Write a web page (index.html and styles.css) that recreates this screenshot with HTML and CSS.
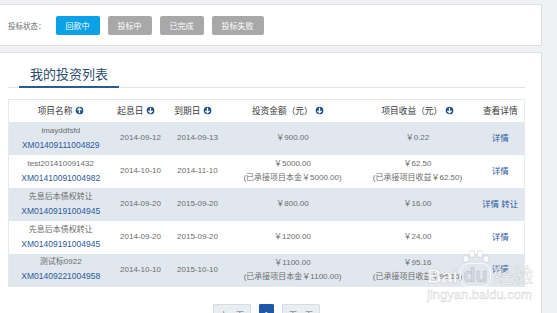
FILE: index.html
```html
<!DOCTYPE html>
<html lang="zh-CN">

<head>
    <meta charset="UTF-8">
    <meta name="viewport" content="width=device-width, initial-scale=1.0">
    <title>我的投资列表</title>
    <link rel="stylesheet" href="styles.css">
</head>

<body>
    <div class="page">
        <div class="status-panel">
            <span class="status-label">投标状态：</span>
            <button class="status-btn active">回款中</button>
            <button class="status-btn">投标中</button>
            <button class="status-btn">已完成</button>
            <button class="status-btn">投标失败</button>
        </div>

        <div class="list-panel">
            <div class="list-head">
                <h2 class="list-title">我的投资列表</h2>
            </div>

            <table class="invest-table">
                <colgroup>
                    <col style="width: 104px">
                    <col style="width: 56px">
                    <col style="width: 58px">
                    <col style="width: 132px">
                    <col style="width: 118px">
                    <col>
                </colgroup>
                <thead>
                    <tr>
                        <th>项目名称 <svg class="sort" viewBox="0 0 10 10"><circle cx="5" cy="5" r="5"/><path d="M5 8V2.4M2.7 4.7 5 2.4 7.3 4.7"/></svg></th>
                        <th class="shift">起息日 <svg class="sort" viewBox="0 0 10 10"><circle cx="5" cy="5" r="5"/><path d="M5 2v5.6M2.7 5.3 5 7.6 7.3 5.3"/></svg></th>
                        <th class="shift">到期日 <svg class="sort" viewBox="0 0 10 10"><circle cx="5" cy="5" r="5"/><path d="M5 2v5.6M2.7 5.3 5 7.6 7.3 5.3"/></svg></th>
                        <th class="shift">投资金额（元） <svg class="sort" viewBox="0 0 10 10"><circle cx="5" cy="5" r="5"/><path d="M5 2v5.6M2.7 5.3 5 7.6 7.3 5.3"/></svg></th>
                        <th>项目收益（元） <svg class="sort" viewBox="0 0 10 10"><circle cx="5" cy="5" r="5"/><path d="M5 2v5.6M2.7 5.3 5 7.6 7.3 5.3"/></svg></th>
                        <th>查看详情</th>
                    </tr>
                </thead>
                <tbody>
                    <tr class="odd">
                        <td>imayddfsfd<br><a href="#">XM01409111004829</a></td>
                        <td>2014-09-12</td>
                        <td>2014-09-13</td>
                        <td>￥900.00</td>
                        <td>￥0.22</td>
                        <td><a href="#">详情</a></td>
                    </tr>
                    <tr>
                        <td>test201410091432<br><a href="#">XM01410091004982</a></td>
                        <td>2014-10-10</td>
                        <td>2014-11-10</td>
                        <td>￥5000.00<br>(已承接项目本金￥5000.00)</td>
                        <td>￥62.50<br>(已承接项目收益￥62.50)</td>
                        <td><a href="#">详情</a></td>
                    </tr>
                    <tr class="odd">
                        <td>先息后本债权转让<br><a href="#">XM01409191004945</a></td>
                        <td>2014-09-20</td>
                        <td>2015-09-20</td>
                        <td>￥800.00</td>
                        <td>￥16.00</td>
                        <td><a href="#">详情</a> <a href="#">转让</a></td>
                    </tr>
                    <tr>
                        <td>先息后本债权转让<br><a href="#">XM01409191004945</a></td>
                        <td>2014-09-20</td>
                        <td>2015-09-20</td>
                        <td>￥1200.00</td>
                        <td>￥24.00</td>
                        <td><a href="#">详情</a></td>
                    </tr>
                    <tr class="odd">
                        <td>测试标0922<br><a href="#">XM01409221004958</a></td>
                        <td>2014-10-10</td>
                        <td>2015-10-10</td>
                        <td>￥1100.00<br>(已承接项目本金￥1100.00)</td>
                        <td>￥95.16<br>(已承接项目收益￥95.16)</td>
                        <td><a href="#">详情</a></td>
                    </tr>
                </tbody>
            </table>

            <div class="pager">
                <button class="page-btn">上一页</button>
                <button class="page-btn current">1</button>
                <button class="page-btn">下一页</button>
            </div>
        </div>
    </div>

    <!-- 水印 -->
    <div class="watermark">
        <svg class="wm-paw" viewBox="0 0 30 16"><ellipse cx="5" cy="9" rx="3" ry="3.6"/><ellipse cx="11" cy="4" rx="3" ry="3.6"/><ellipse cx="19" cy="4" rx="3" ry="3.6"/><ellipse cx="25" cy="9" rx="3" ry="3.6"/></svg>
        <div class="wm-logo">
            <span>Bai</span>
            <span class="wm-du">du</span>
            <span class="wm-cn">经验</span>
        </div>
        <div class="wm-url">jingyan.baidu.com</div>
    </div>
</body>

</html>
```

FILE: styles.css
```css
* {
    box-sizing: border-box;
    margin: 0;
}

body {
    background-color: #f0f1f2;
    font-family: "Liberation Sans", "Noto Sans CJK SC", sans-serif;
    color: #6c6c6c;
    overflow: hidden;
}

.page {
    padding: 4px 15px 0 0;
}

.status-panel {
    display: flex;
    align-items: center;
    height: 42px;
    padding-left: 8px;
    background-color: #fff;
    border: 1px solid #dde1e5;
    border-left: none;
}

.status-label {
    font-size: 7.5px;
    margin-right: 10px;
}

.status-btn {
    height: 19px;
    padding: 0 10px;
    margin-right: 8px;
    font-family: inherit;
    font-size: 8px;
    color: #fff;
    border: none;
    border-radius: 2px;
    background-color: #a8a8a8;
}

.status-btn.active {
    background-color: #0ba1e7;
}

.list-panel {
    margin-top: 6px;
    min-height: 300px;
    background-color: #fff;
    border: 1px solid #dde1e5;
    border-left: none;
}

.list-head {
    margin: 0 16px 0 8px;
    border-bottom: 1px solid #dfe3e8;
}

.list-title {
    display: inline-block;
    margin-left: 11px;
    margin-bottom: -1px;
    padding: 13px 11px 3px;
    font-size: 13px;
    line-height: 17px;
    font-weight: normal;
    color: #2c4a6d;
    border-bottom: 2px solid #2a5a98;
}

.invest-table {
    width: 517px;
    margin: 11px 0 0 8px;
    border-collapse: collapse;
    table-layout: fixed;
    border: 1px solid #e6eaee;
    font-size: 8px;
    text-align: center;
}

.invest-table th {
    height: 22px;
    font-size: 8.7px;
    font-weight: normal;
    color: #383838;
    white-space: nowrap;
}

.invest-table th.shift {
    padding-right: 10px;
}

.invest-table td {
    height: 33px;
    line-height: 14px;
    white-space: nowrap;
}

.invest-table tr.odd td {
    background-color: #e1e7ee;
}

.invest-table a {
    color: #2b5a9c;
    text-decoration: none;
    font-size: 8.5px;
}

.sort {
    width: 9px;
    height: 9px;
    vertical-align: -1px;
    fill: #1d4d89;
    stroke: #fff;
    stroke-width: 1.4;
}

.pager {
    display: flex;
    justify-content: center;
    gap: 8px;
    width: 517px;
    margin: 17px 0 0 8px;
}

.page-btn {
    height: 20px;
    padding: 0 6px;
    font-family: inherit;
    font-size: 8px;
    color: #667;
    background-color: #e9eef3;
    border: 1px solid #d5dce3;
    border-radius: 1px;
}

.page-btn.current {
    width: 15px;
    padding: 0;
    color: #fff;
    background-color: #1e58a6;
    border-color: #1e58a6;
}

.watermark {
    position: absolute;
    left: 427px;
    top: 252px;
    color: rgba(255, 255, 255, .8);
    -webkit-text-stroke: .5px rgba(150, 150, 150, .45);
    pointer-events: none;
}

.wm-paw {
    position: absolute;
    left: 34px;
    top: -2px;
    width: 30px;
    height: 16px;
    fill: rgba(255, 255, 255, .8);
    stroke: rgba(150, 150, 150, .45);
    stroke-width: .6;
}

.wm-logo {
    display: flex;
    align-items: flex-end;
    padding-top: 11px;
    font-size: 20px;
    font-weight: bold;
    line-height: 22px;
}

.wm-du {
    margin: 0 3px 0 2px;
    padding: 0 2px;
    border: 1.5px solid rgba(255, 255, 255, .8);
    border-radius: 9px;
    color: rgba(200, 205, 212, .6);
}

.wm-cn {
    font-weight: normal;
}

.wm-url {
    font-size: 13px;
    line-height: 14px;
    margin-top: 1px;
}
```
